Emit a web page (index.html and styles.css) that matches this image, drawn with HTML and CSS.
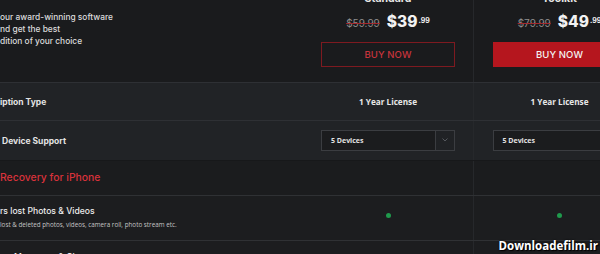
FILE: index.html
```html
<!DOCTYPE html>
<html lang="en">
<head>
<meta charset="utf-8">
<link rel="stylesheet" href="styles.css">
</head>
<body>
<div class="page">
  <section class="grid hero">
    <div class="cell hero-text">
      <p>our award-winning software</p>
      <p>nd get the best</p>
      <p>dition of your choice</p>
    </div>
    <div class="cell plan">
      <h3 class="plan-name">Standard</h3>
      <div class="price"><span class="old">$59.99</span><span class="new">$39<sup>.99</sup></span></div>
      <a class="btn btn-outline">BUY NOW</a>
    </div>
    <div class="cell plan col-sep">
      <h3 class="plan-name">Toolkit</h3>
      <div class="price"><span class="old">$79.99</span><span class="new">$49<sup>.99</sup></span></div>
      <a class="btn btn-fill">BUY NOW</a>
    </div>
  </section>

  <section class="grid row row-alt">
    <div class="cell label-cell"><span class="label">iption Type</span></div>
    <div class="cell center"><span class="value">1 Year License</span></div>
    <div class="cell center col-sep"><span class="value">1 Year License</span></div>
  </section>

  <section class="grid row row-alt row-select">
    <div class="cell label-cell"><span class="label"> Device Support</span></div>
    <div class="cell center">
      <div class="select"><span class="select-text">5 Devices</span><span class="select-arrow"><svg width="6" height="4" viewBox="0 0 6 4"><path d="M0.5 0.5 L3 3 L5.5 0.5" fill="none" stroke="#55585d" stroke-width="1"/></svg></span></div>
    </div>
    <div class="cell center col-sep">
      <div class="select"><span class="select-text">5 Devices</span><span class="select-arrow"><svg width="6" height="4" viewBox="0 0 6 4"><path d="M0.5 0.5 L3 3 L5.5 0.5" fill="none" stroke="#55585d" stroke-width="1"/></svg></span></div>
    </div>
  </section>

  <section class="grid section-head">
    <div class="cell label-cell"><h2 class="section-title">Recovery for iPhone</h2></div>
    <div class="cell"></div>
    <div class="cell col-sep"></div>
  </section>

  <section class="grid row feature">
    <div class="cell label-cell">
      <span class="feat-title">rs lost Photos &amp; Videos</span>
      <span class="feat-sub">lost &amp; deleted photos, videos, camera roll, photo stream etc.</span>
    </div>
    <div class="cell center"><span class="dot"></span></div>
    <div class="cell center col-sep"><span class="dot"></span></div>
  </section>

  <section class="grid row feature">
    <div class="cell label-cell"><span class="feat-title next">Messages &amp; Chats</span></div>
    <div class="cell"></div>
    <div class="cell col-sep"></div>
  </section>

  <div class="watermark">Downloadefilm.ir</div>
</div>
</body>
</html>
```

FILE: styles.css
```css
* { box-sizing: border-box; margin: 0; padding: 0; }
html, body { width: 600px; height: 254px; overflow: hidden; background: #1b1c1e; }
body { font-family: "Inter", "Noto Sans", sans-serif; color: #e6e6e6; }

.page { position: relative; width: 600px; height: 254px; overflow: hidden; }

.grid { display: grid; grid-template-columns: 303px 170px 172px; width: 645px; }

.col-sep { border-left: 1px solid #26282b; }

.hero { height: 82px; background: #1a1b1d; }
.hero-text { padding-top: 11px; }
.hero-text p { font-size: 8.4px; line-height: 12px; font-weight: 500; color: #dcdcdc; }

.plan { display: flex; flex-direction: column; align-items: center; }
.plan-name { font-size: 10.5px; font-weight: 700; color: #e8e8e8; line-height: 12px; margin-top: -7px; }
.price { display: flex; align-items: flex-start; gap: 7px; margin-top: 8px; height: 18px; }
.old { font-size: 10px; color: #8e8e8e; text-decoration: line-through; text-decoration-color: #a3282e; margin-top: 4px; }
.new { font-size: 15.5px; font-weight: 800; color: #f2f2f2; line-height: 18px; }
.new sup { font-size: 7px; font-weight: 700; vertical-align: top; position: relative; top: -1px; margin-left: 1px; }

.btn { display: flex; align-items: center; justify-content: center; width: 134px; height: 25px; margin-top: 11px; font-size: 9.5px; font-weight: 500; letter-spacing: 0.1px; }
.btn-outline { border: 1px solid #7e1a20; color: #c9343c; }
.btn-fill { background: #b5161e; color: #f4f4f4; }

.row { border-top: 1px solid #2e3034; }
.row-alt { background: #212326; height: 38px; }
.row-select { height: 40px; }

.label-cell { display: flex; flex-direction: column; justify-content: center; }
.label { font-size: 8.5px; font-weight: 700; color: #e4e4e4; white-space: pre; }

.center { display: flex; align-items: center; justify-content: center; }
.value { font-family: "Open Sans", sans-serif; font-size: 8.2px; font-weight: 700; color: #e8e8e8; }

.select { display: flex; width: 134px; height: 21px; border: 1px solid #3b3d41; background: #1b1c1e; margin-top: -1px; }
.select-text { flex: 1; display: flex; align-items: center; padding-left: 9px; font-family: "Open Sans", sans-serif; font-size: 7px; font-weight: 700; color: #e2e2e2; }
.select-arrow { width: 19px; border-left: 1px solid #3b3d41; display: flex; align-items: center; justify-content: center; background: #202225; }

.section-head { height: 35px; background: #1b1c1e; border-top: 1px solid #17181a; }
.section-title { font-size: 10.4px; font-weight: 500; color: #d8323b; line-height: 14px; margin-top: -1px; }

.feature { height: 45px; background: #1c1d1f; border-top: 1px solid #2f3134; }
.feature .label-cell { justify-content: flex-start; padding-top: 10px; gap: 4px; }
.feat-title { font-size: 8.6px; font-weight: 500; color: #ececec; line-height: 11px; }
.feat-sub { font-family: "Open Sans", sans-serif; font-size: 6.3px; color: #c4c4c4; line-height: 8px; }
.feat-title.next { padding-left: 14px; margin-top: 1px; }
.dot { width: 5px; height: 5px; border-radius: 50%; background: #1f9a4c; margin-top: -6px; }

.watermark { position: absolute; right: 2px; bottom: 1px; font-family: "Open Sans", sans-serif; font-size: 11.5px; font-weight: 700; color: #ffffff; text-shadow: 0 0 2px #000, 1px 1px 1px #000; }
```
